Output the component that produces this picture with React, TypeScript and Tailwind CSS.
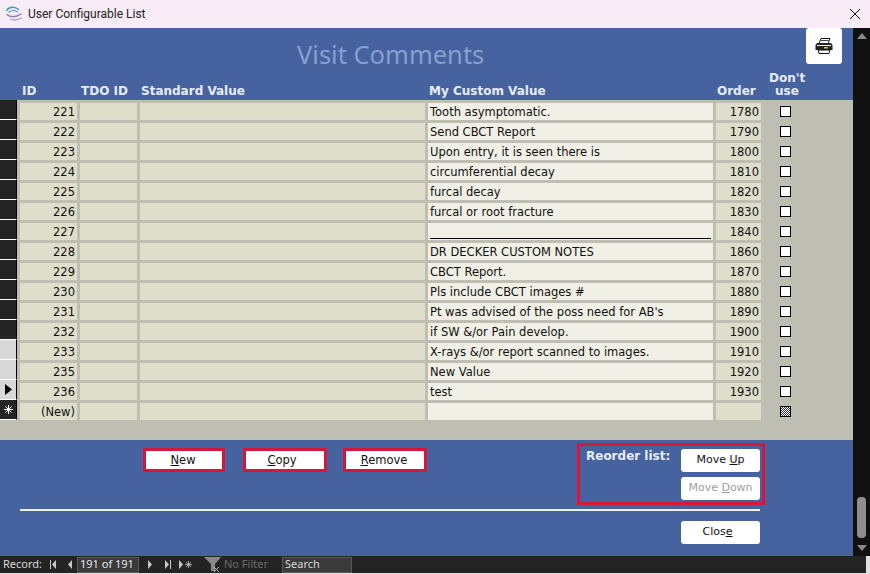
const rows = [
  { id: "221", value: "Tooth asymptomatic.", order: "1780" },
  { id: "222", value: "Send CBCT Report", order: "1790" },
  { id: "223", value: "Upon entry, it is seen there is", order: "1800" },
  { id: "224", value: "circumferential decay", order: "1810" },
  { id: "225", value: "furcal decay", order: "1820" },
  { id: "226", value: "furcal or root fracture", order: "1830" },
  { id: "227", value: "", order: "1840", rule: true },
  { id: "228", value: "DR DECKER CUSTOM NOTES", order: "1860" },
  { id: "229", value: "CBCT Report.", order: "1870" },
  { id: "230", value: "Pls include CBCT images #", order: "1880" },
  { id: "231", value: "Pt was advised of the poss need for AB's", order: "1890" },
  { id: "232", value: "if SW &/or Pain develop.", order: "1900" },
  { id: "233", value: "X-rays &/or report scanned to images.", order: "1910", light: true },
  { id: "235", value: "New Value", order: "1920", light: true },
  { id: "236", value: "test", order: "1930", light: true, current: true },
];

function Star({ color, size }: { color: string; size: number }) {
  return (
    <svg width={size} height={size} viewBox="0 0 10 10" stroke={color} strokeWidth="1.1">
      <path d="M5 0 V10 M0 5 H10 M1.5 1.5 L8.5 8.5 M8.5 1.5 L1.5 8.5" />
    </svg>
  );
}

function Row({ selector, dark, id, value, order, rule, box }: {
  selector?: React.ReactNode;
  dark: boolean;
  id: string;
  value: string;
  order: string;
  rule?: boolean;
  box?: boolean;
}) {
  return (
    <div className="flex h-5">
      <div className={`flex h-5 w-[17px] shrink-0 items-center justify-center border-r border-b border-r-black border-b-white ${dark ? "bg-[#242424]" : "bg-[#d8d8d8]"}`}>
        {selector}
      </div>
      <div className="ml-[3px] mt-[3px] flex h-[17px] w-[57px] items-center justify-end bg-[#dedecb] pr-[2px] pt-[2px]">{id}</div>
      <div className="ml-[3px] mt-[3px] h-[17px] w-[57px] bg-[#dedecb]" />
      <div className="ml-[3px] mt-[3px] h-[17px] w-[285px] bg-[#dedecb]" />
      <div className="ml-[3px] mt-[3px] flex h-[17px] w-[285px] items-center bg-[#f0f0e6] pl-[2px] pr-[2px] pt-[2px]">
        {rule ? <div className="mt-[11px] h-px w-full bg-black" /> : value}
      </div>
      <div className="ml-[3px] mt-[3px] flex h-[17px] w-[45px] items-center justify-end bg-[#dedecb] pr-[2px] pt-[2px]">{order}</div>
      <div className="ml-[19px] mt-[6px] h-[11px] w-[11px] border border-black bg-white">
        {box && <div className="h-full w-full bg-[repeating-conic-gradient(#333_0_25%,#fff_0_50%)] bg-[length:2px_2px]" />}
      </div>
    </div>
  );
}

function Btn({ children, disabled }: { children: React.ReactNode; disabled?: boolean }) {
  return (
    <div className={`flex h-[23px] w-[79px] items-center justify-center rounded-[3px] bg-white text-[11px] ${disabled ? "text-[#a0a0a0]" : "text-[#111]"}`}>
      {children}
    </div>
  );
}

function RedBtn({ children, w }: { children: React.ReactNode; w: string }) {
  return (
    <div className={`flex h-6 items-center justify-center border-[3px] border-[#d5173c] bg-white pt-px text-[#111] ${w}`}>
      {children}
    </div>
  );
}

export default function App() {
  return (
    <div className="flex h-[574px] w-[870px] flex-col overflow-hidden bg-[#e0e0e0] font-['DejaVu_Sans',sans-serif] text-[11.5px] text-[#111]">
      {/* title bar */}
      <div className="flex h-7 shrink-0 items-center bg-[#f8ecf6] pl-[6px] pr-[10px]">
        <svg width="17" height="16" viewBox="0 0 17 16" fill="none" strokeLinecap="round">
          <path d="M0.5 4.5 C3 0.5 9 0 12.5 3.5" stroke="#3f9fc4" strokeWidth="1.5" />
          <path d="M3 6 C5.5 4 9 4 11.5 6" stroke="#5fb0cf" strokeWidth="1.3" />
          <path d="M1 8.5 C4 11.5 10 11.5 15 8" stroke="#8a7fb0" strokeWidth="1.5" />
          <path d="M4.5 13 C7.5 14.5 11 14.5 15.5 12" stroke="#a99ac0" strokeWidth="1.3" />
        </svg>
        <span className="ml-[5px] font-['Roboto',sans-serif] text-[12px] text-[#222]">User Configurable List</span>
        <svg className="ml-auto" width="10" height="10" viewBox="0 0 10 10" stroke="#111" strokeWidth="1">
          <path d="M0 0 L10 10 M10 0 L0 10" />
        </svg>
      </div>

      <div className="flex min-h-0 flex-1">
        <div className="flex w-[853px] flex-col">
          {/* form header */}
          <div className="relative h-[72px] bg-[#46639f]">
            <div className="pl-[297px] pt-[10px] font-['Noto_Sans',sans-serif] text-[25.5px] leading-8 text-[#86a0cf]">Visit Comments</div>
            <div className="absolute left-[806px] top-0 flex h-9 w-9 items-center justify-center rounded-[3px] bg-white">
              <svg width="18" height="16" viewBox="0 0 18 16">
                <path d="M6 0.5 H15 L13 5.5 H4 Z" fill="#fff" stroke="#111" />
                <path d="M6 2.5 H13.5" stroke="#111" strokeWidth="0.8" />
                <path d="M2 5 H16 L17.5 7 V12 H0.5 V7 Z" fill="#222" />
                <path d="M2 7.5 H16" stroke="#fff" />
                <path d="M3 12 H15 L14 15.5 H4 Z" fill="#fff" stroke="#111" />
                <rect x="9" y="9" width="4" height="1.5" fill="#d8c23a" />
              </svg>
            </div>
            <div className="absolute bottom-[2px] left-0 flex items-end text-[12px] font-bold leading-[13px] text-[#e6ecf8]">
              <span className="ml-[22px] w-[59px]">ID</span>
              <span className="w-[60px]">TDO ID</span>
              <span className="w-[288px]">Standard Value</span>
              <span className="w-[288px]">My Custom Value</span>
              <span className="w-[52px]">Order</span>
              <span className="w-[36px] text-center">Don't<br />use</span>
            </div>
          </div>

          {/* records */}
          <div className="h-[340px] bg-[#bebeb2]">
            {rows.map((r) => (
              <Row
                key={r.id}
                dark={!r.light}
                id={r.id}
                value={r.value}
                order={r.order}
                rule={r.rule}
                selector={r.current && (
                  <svg width="7" height="11" viewBox="0 0 7 11"><path d="M0 0 L7 5.5 L0 11 Z" fill="#000" /></svg>
                )}
              />
            ))}
            <Row dark id="(New)" value="" order="" box selector={<Star color="#fff" size={9} />} />
          </div>

          {/* form footer */}
          <div className="flex flex-1 flex-col bg-[#46639f] pl-5">
            <div className="flex h-[69px] items-start">
              <div className="ml-[123px] mt-2 flex">
                <RedBtn w="w-[82px]"><span className="pr-[2px]"><u>N</u>ew</span></RedBtn>
                <div className="ml-[18px]"><RedBtn w="w-[84px]"><span className="pr-[6px]"><u>C</u>opy</span></RedBtn></div>
                <div className="ml-4"><RedBtn w="w-[84px]"><span className="pr-[2px]"><u>R</u>emove</span></RedBtn></div>
              </div>
              <div className="ml-[150px] mt-[3px] flex h-[62px] w-[188px] border-[3px] border-[#d5173c] pl-[6px] pt-[3px]">
                <span className="-mt-[2px] w-[95px] text-[12px] font-bold text-[#e6ecf8]">Reorder list:</span>
                <div className="flex flex-col gap-[5px]">
                  <Btn><span>Move <u>U</u>p</span></Btn>
                  <Btn disabled><span>Move <u>D</u>own</span></Btn>
                </div>
              </div>
            </div>
            <div className="h-0.5 w-[740px] bg-[#eef0f6]" />
            <div className="ml-[661px] mt-[10px]">
              <Btn><span className="pr-[6px]">Clos<u>e</u></span></Btn>
            </div>
          </div>
        </div>

        {/* scrollbar */}
        <div className="flex w-[17px] flex-col items-center justify-between bg-[#111] pt-[5px] pb-[5px]">
          <div className="h-0 w-0 border-x-[5px] border-b-[6px] border-x-transparent border-b-[#8a8a8a]" />
          <div className="mt-auto mb-[7px] h-[41px] w-[9px] rounded-[4px] bg-[#8f8f8f]" />
          <div className="h-0 w-0 border-x-[5px] border-t-[6px] border-x-transparent border-t-[#8a8a8a]" />
        </div>
      </div>

      {/* navigation bar */}
      <div className="mb-px flex h-[17px] w-[866px] shrink-0 items-center bg-[#242424] pl-[3px] font-['Noto_Sans',sans-serif] text-[11px] text-[#d8d8d8]">
        <span className="w-[47px]">Record:</span>
        <svg className="w-[18px]" height="9" viewBox="0 0 18 9" fill="#c8c8c8"><path d="M0 0 H1 V9 H0 Z M6 0 V9 L2 4.5 Z" /></svg>
        <svg className="w-[9px]" height="9" viewBox="0 0 9 9" fill="#c8c8c8"><path d="M4 0 V9 L0 4.5 Z" /></svg>
        <span className="flex h-[16px] w-[62px] items-center border border-[#5a5a5a] bg-[#3a3a3a] pl-[2px] text-[#e8e8e8]">191 of 191</span>
        <svg className="ml-[9px] w-[17px]" height="9" viewBox="0 0 17 9" fill="#c8c8c8"><path d="M0 0 L4 4.5 L0 9 Z" /></svg>
        <svg className="w-[14px]" height="9" viewBox="0 0 14 9" fill="#c8c8c8"><path d="M0 0 L4 4.5 L0 9 Z M5 0 H6 V9 H5 Z" /></svg>
        <svg className="mr-[1px]" width="5" height="9" viewBox="0 0 5 9" fill="#c8c8c8"><path d="M0 0 L4 4.5 L0 9 Z" /></svg>
        <Star color="#c8c8c8" size={7} />
        <svg className="ml-[12px]" width="18" height="15" viewBox="0 0 18 15">
          <path d="M0 0 H17 L11 7 V14 H7 V7 Z" fill="#8a8a8a" />
          <path d="M10 10 L15 15 M15 10 L10 15" stroke="#bbb" />
        </svg>
        <span className="ml-[2px] w-[58px] text-[#6a6a6a]">No Filter</span>
        <span className="flex h-[16px] w-[70px] items-center border border-[#5a5a5a] bg-[#3a3a3a] pl-[2px]">Search</span>
      </div>
    </div>
  );
}
